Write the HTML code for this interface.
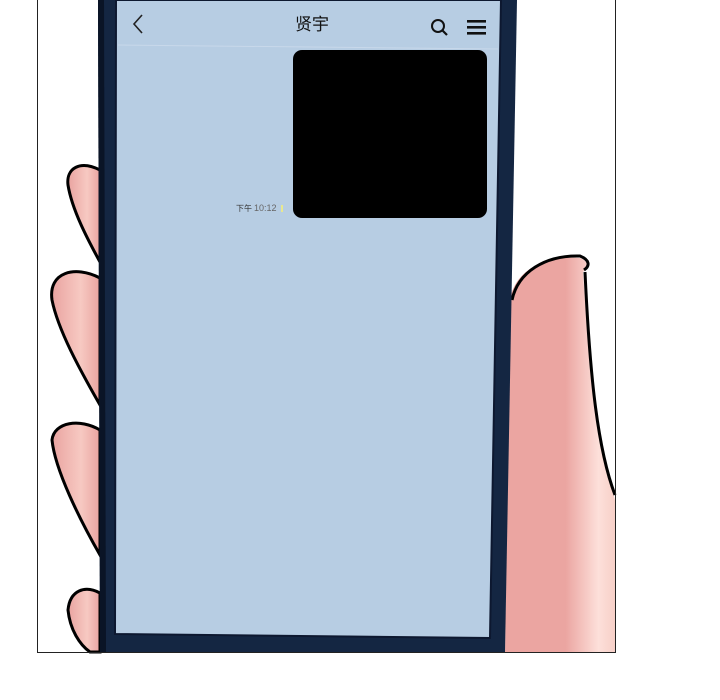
<!DOCTYPE html>
<html><head><meta charset="utf-8"><style>
html,body{margin:0;padding:0;background:#fff;width:720px;height:700px;overflow:hidden}
svg{position:absolute;left:0;top:0}
.t{font-family:"Liberation Sans","Noto Sans CJK SC",sans-serif}
</style></head><body>
<svg width="720" height="700" viewBox="0 0 720 700">
<defs>
<linearGradient id="sk" x1="0" x2="1" y1="0" y2="0">
<stop offset="0" stop-color="#e9a3a0"/><stop offset="0.6" stop-color="#f7c9c2"/><stop offset="1" stop-color="#e9a3a0"/>
</linearGradient>
<linearGradient id="hr" x1="0" x2="1" y1="0" y2="0">
<stop offset="0" stop-color="#eba5a1"/><stop offset="0.55" stop-color="#eba5a1"/><stop offset="0.85" stop-color="#fde0da"/><stop offset="1" stop-color="#f7d0c8"/>
</linearGradient>
</defs>
<!-- right hand -->
<path d="M510 300 C515 270 545 255 580 258 C590 262 588 268 583 272 C590 380 600 440 615 500 L615 652 L505 652 Z" fill="url(#hr)"/>
<path d="M512 300 C518 272 545 255 580 256 C590 260 590 266 584 270" stroke="#000" stroke-width="3" fill="none"/>
<path d="M585 272 C590 380 598 450 615 495" stroke="#000" stroke-width="3" fill="none"/>
<!-- left fingers -->
<path d="M100 170 C80 160 66 168 68 185 C72 210 88 240 100 262 Z" fill="url(#sk)" stroke="#000" stroke-width="3"/>
<path d="M100 278 C75 265 48 272 52 300 C58 330 80 370 100 405 Z" fill="url(#sk)" stroke="#000" stroke-width="3"/>
<path d="M100 430 C80 418 54 422 52 440 C55 470 80 520 100 555 Z" fill="url(#sk)" stroke="#000" stroke-width="3"/>
<path d="M100 593 C85 585 70 590 68 610 C70 630 80 645 90 652 L100 652 Z" fill="url(#sk)" stroke="#000" stroke-width="3"/>
<!-- phone frame -->
<path d="M98 0 L517 0 L505 652 L100 652 Z" fill="#142642"/>
<path d="M98 0 L104 0 L106 652 L100 652 Z" fill="#0a1426"/>
<!-- screen -->
<path d="M116 0 L501 0 L490 638 L115 634 Z" fill="#b7cde3" stroke="#0d1830" stroke-width="2"/>
<line x1="118" y1="45" x2="498" y2="49" stroke="#c8d8ea" stroke-width="1"/>
<!-- back -->
<path d="M142 15 L134 24 L142 33" stroke="#222" stroke-width="1.6" fill="none"/>
<text x="312" y="30" class="t" font-size="17" text-anchor="middle" fill="#111">贤宇</text>
<circle cx="438" cy="26" r="6" stroke="#111" stroke-width="2" fill="none"/>
<line x1="442" y1="30" x2="447" y2="35" stroke="#111" stroke-width="2.2"/>
<rect x="467" y="20" width="19" height="2.6" fill="#111"/>
<rect x="467" y="26" width="19" height="2.6" fill="#111"/>
<rect x="467" y="32" width="19" height="2.6" fill="#111"/>
<!-- image -->
<rect x="293" y="50" width="194" height="168" rx="9" fill="#000"/>
<text x="236" y="211" class="t" font-size="8" fill="#333">下午</text>
<text x="254" y="211" class="t" font-size="9" fill="#666">10:12</text>
<rect x="281" y="205" width="2" height="7" fill="#e8e890"/>
<!-- panel border -->
<rect x="37.5" y="-2" width="578" height="654.5" fill="none" stroke="#222" stroke-width="1"/>
</svg>
</body></html>
